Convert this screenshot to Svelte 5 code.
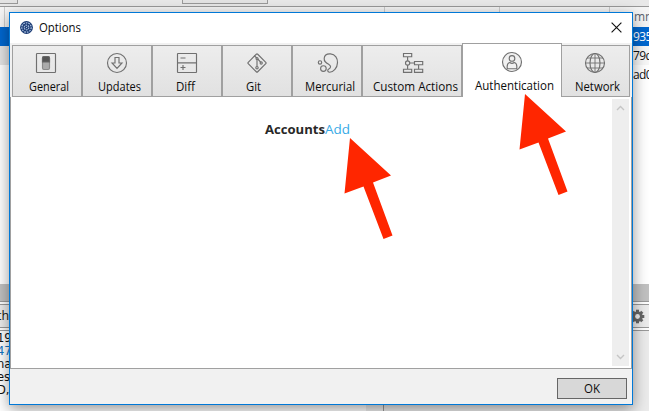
<script>
  const tabs = [
    { name: 'General', w: 70, x: 16, icon: 22, text: 40 },
    { name: 'Updates', w: 70, x: 15, icon: 23, text: 43 },
    { name: 'Diff', w: 70, x: 23, icon: 23, text: 19 },
    { name: 'Git', w: 70, x: 23, icon: 23, text: 15 },
    { name: 'Mercurial', w: 70, x: 12, icon: 24, text: 50 },
    { name: 'Custom Actions', w: 100, x: 10, icon: 39, text: 85 },
    { name: 'Authentication', w: 100, x: 12, icon: 38, text: 79, active: true },
    { name: 'Network', w: 69, x: 13, icon: 22, text: 45 }
  ];
</script>

{#snippet fit(text, w, cls = '')}
  <svg class="fit {cls}" width={w} height="18"><text x="0" y="13" font-size="13" textLength={w} lengthAdjust="spacingAndGlyphs">{text}</text></svg>
{/snippet}

<div class="desktop">
  <div class="toolbar"><i class="box one"></i><i class="box two"></i></div>
  <div class="head"><i></i><i></i><i></i><i></i><span>mn</span></div>
  <div class="row sel"><span>935</span></div>
  <div class="row alt"><span>79d</span></div>
  <div class="row"><span>ad0</span></div>
  <div class="blank"></div>
  <div class="splitter"></div>
  <div class="bar"><span>th</span>
    <svg width="15" height="15" viewBox="-7.5 -7.5 15 15">
      <g fill="#666">{#each [0, 45, 90, 135] as a}<rect x="-1.5" y="-6.8" width="3" height="13.6" transform="rotate({a})" />{/each}</g>
      <circle r="4" fill="none" stroke="#666" stroke-width="2.5" /><circle r="2.4" fill="#eee" />
    </svg>
  </div>
  <div class="bottom">
    <div class="log"><p>19</p><p class="link">47</p><p>na</p><p>esc</p><p>D,</p></div>
    <div class="pane"></div>
  </div>

  <div class="window">
    <div class="title">
      <svg width="13" height="13" viewBox="0 0 13 13">
        <circle cx="6.5" cy="6.5" r="6.4" fill="#173872" />
        <circle cx="6.5" cy="6.5" r="4.7" fill="none" stroke="#a5bbdc" stroke-width="1.3" stroke-dasharray="1.7 .9" />
        <circle cx="6.5" cy="6.5" r="2.3" fill="none" stroke="#a5bbdc" stroke-width="1.3" stroke-dasharray="1.5 .7" />
        <circle cx="6.5" cy="6.5" r=".7" fill="#a5bbdc" />
      </svg>
      {@render fit('Options', 42)}
      <svg class="close" width="11" height="11" viewBox="0 0 11 11"><path d="M.6.6l9.8 9.8M10.4.6L.6 10.4" stroke="#111" stroke-width="1.15" /></svg>
    </div>
    <div class="tabs">
      {#each tabs as tab, i}
        <div class="tab" class:active={tab.active} style="width:{tab.w}px">
          <svg class="icon" style="margin-left:{tab.icon}px" width="22" height="22" viewBox="-11 -11 22 22" fill="none" stroke="#707070" stroke-width="1.15">
            {#if i === 0}
              <rect x="-9.5" y="-9.5" width="19" height="19" rx=".7" /><rect x="-3.5" y="-6.5" width="7" height="13" rx="1.5" fill="#aaa" stroke="#888" /><path d="M-3.5-1v-4q0-1.5 1.5-1.5h4q1.5 0 1.5 1.5v4z" fill="#555" stroke="#666" />
            {:else if i === 1}
              <circle r="9.5" /><path d="M-2-5.5h4V0h3L0 5.5-5 0h3z" />
            {:else if i === 2}
              <rect x="-9.5" y="-9.5" width="19" height="19" rx=".5" /><path d="M-9.5-.2h19M-6.5-5h5M-6.5 4.5h5M-4 2v5" />
            {:else if i === 3}
              <rect x="-6.7" y="-6.7" width="13.4" height="13.4" rx="1" transform="rotate(45)" /><circle cy="-4.5" r="1" /><circle cy="4.7" r="1.2" /><circle cx="4.2" cy="0" r="1.1" /><path d="M-3-7.2L0-5M0-3.5v7M.8-4l2.8 3.2" />
            {:else if i === 4}
              <path d="M-3.8-4.8C-3.5-8-.5-9.3 2.5-9.1 7.4-8.8 9.7-4.5 9.5-.4 9.3 5 5.5 9.3 1.5 9.2-.7 9-.8 6.9.8 6 3.2 4.5 3 2.8 1.2 1.7-1.8-.1-4.1-1.2-3.8-4.8z" /><circle cx="-4.6" cy="5.5" r="2.8" /><circle cx="-8" cy="-.6" r="1.7" />
            {:else if i === 5}
              <path d="M-9.5-9.5h8.2v3.2h-8.2zM-9.5 6.2h8.2v3.2h-8.2zM1.5-1.5h8.2v3.2H1.5zM1.5 6.2h8.2v3.2H1.5zM-5.4-6.3v4M-5.4 2v4.2M-3.2 0h4.7M5.6 1.7v4.5" /><circle cx="-5.4" cy="0" r="2.1" />
            {:else if i === 6}
              <circle r="9.5" fill="#f0f0f0" /><circle cy="-3.6" r="2.8" /><path d="M-4.8 6.7V4.3Q-4.8 1-2.2.5Q0 2.4 2.2.5Q4.8 1 4.8 4.3v2.4z" />
            {:else}
              <circle r="9.5" /><ellipse rx="5" ry="9.5" /><path d="M-8-5H8M-9.5 0h19M-8 5H8M0-9.5v19" stroke-width=".9" />
            {/if}
          </svg>
          <div class="label" style="margin-left:{tab.x}px">{@render fit(tab.name, tab.text)}</div>
        </div>
      {/each}
    </div>
    <div class="content">
      <div class="accounts">{@render fit('Accounts', 60, 'bold')}{@render fit('Add', 25, 'blue')}</div>
      <div class="scroll"><svg width="9" height="6"><path d="M1 5l3.5-3.5L8 5" /></svg><svg width="9" height="6"><path d="M1 1l3.5 3.5L8 1" /></svg></div>
    </div>
    <div class="footer"><button>{@render fit('OK', 16)}</button></div>
  </div>
  <svg class="arrows" width="649" height="411" fill="#ff2600">
    <path d="M350 138L391 175.5 373 182.5 392.5 235.5 383.5 239 363.5 186.5 344.5 193.5z" />
    <path d="M525 94L566 131.5 548 138.5 567.5 191.5 558.5 195 538.5 142.5 519.5 149.5z" />
  </svg>
</div>

<style>
  .desktop { position: relative; width: 649px; height: 411px; overflow: hidden; background: #fff; font-family: 'Open Sans', 'Noto Sans', sans-serif; font-size: 12px; color: #111; display: flex; flex-direction: column; }
  .desktop * { box-sizing: border-box; }
  .toolbar { height: 7px; flex: none; background: #e8e8e8; border-bottom: 1px solid #999; display: flex; }
  .box { height: 4px; border: 1px solid #999; border-top: 0; background: #e3e3e3; }
  .one { width: 19px; margin-left: -1px; } .two { width: 86px; margin-left: 164px; }
  .head { height: 20px; flex: none; background: #f5f5f5; color: #5c6470; display: flex; }
  .head i { border-right: 1px solid #ccc; width: 5px; flex: none; }
  .head i:nth-child(2) { width: 380px; } .head i:nth-child(3) { width: 115px; } .head i:nth-child(4) { width: 110px; }
  .head span { margin: 1px 0 0 24px; line-height: 18px; }
  .row { height: 19px; flex: none; line-height: 19px; padding-left: 633px; white-space: nowrap; font-size: 12px; letter-spacing: -.6px; }
  .sel { background: #0067cf; color: #fff; }
  .row.alt { background: linear-gradient(90deg, #e4e4e4 400px, #f7f7f7 400px); }
  .blank { height: 200px; flex: none; }
  .splitter { height: 18px; flex: none; background: #c1c1c1; border-bottom: 1px solid #999; }
  .bar { height: 24px; flex: none; margin-top: 2px; border: 1px solid #999; border-width: 1px 0; background: #ececec; display: flex; align-items: center; }
  .bar span { width: 630px; font-size: 12.5px; margin: -2px 0 0 -3px; }
  .bar svg { margin-left: 3px; }
  .bottom { flex: 1; margin-top: 2px; border-top: 1px solid #999; display: flex; }
  .log { width: 384px; border-right: 1px solid #999; padding-top: 1px; background: linear-gradient(90deg, #fff 366px, #eee 366px); }
  .log p { margin: 0 0 0 -3px; height: 13px; line-height: 13px; font-size: 11.5px; font-family: 'DejaVu Sans', sans-serif; }
  .log .link { color: #1674c1; }
  .pane { flex: 1; background: #ebebeb; }
  .window { position: absolute; left: 9px; top: 12px; width: 624px; height: 393px; border: 1px solid #0078d7; background: #f1f1f1; box-shadow: 0 4px 14px rgba(0, 0, 0, .42); display: flex; flex-direction: column; }
  .title { height: 30px; flex: none; background: #fff; display: flex; align-items: center; padding: 0 10px 2px 10px; }
  .title .fit { margin-left: 6px; margin-top: 1px; }
  .close { margin-left: auto; }
  .fit { display: block; overflow: visible; fill: #0c0c0c; }
  .bold { font-weight: 700; fill: #282828; } .blue { fill: #37aae6; }
  .tabs { height: 54px; flex: none; display: flex; align-items: flex-end; padding-left: 2px; }
  .tab { height: 52px; border: 1px solid #a0a0a0; background: linear-gradient(#ededed, #e1e1e1); padding-top: 6px; flex: none; }
  .tab.active { height: 54px; border-bottom: 0; background: #fff; margin-right: -1px; padding-top: 7px; position: relative; z-index: 1; }
  .icon { display: block; }
  .label { margin-top: 4px; height: 18px; }
  .content { height: 272px; flex: none; background: #fff; border: 1px solid #a0a0a0; border-top: 0; display: flex; justify-content: space-between; }
  .accounts { display: flex; padding: 24px 0 0 254px; }
  .scroll { width: 17px; margin: 2px 2px 2px 0; background: #eee; display: flex; flex-direction: column; justify-content: space-between; align-items: center; padding: 6px 0; }
  .scroll path { fill: none; stroke: #c5c5c5; stroke-width: 1.4; }
  .footer { flex: 1; display: flex; justify-content: flex-end; padding: 9px 5px 0 0; }
  button { width: 70px; height: 21px; border: 1px solid #666; background: #d8d8d8; padding: 0; display: flex; justify-content: center; align-items: center; font-family: inherit; }
  .arrows { position: absolute; left: 0; top: 0; z-index: 2; pointer-events: none; }
</style>
